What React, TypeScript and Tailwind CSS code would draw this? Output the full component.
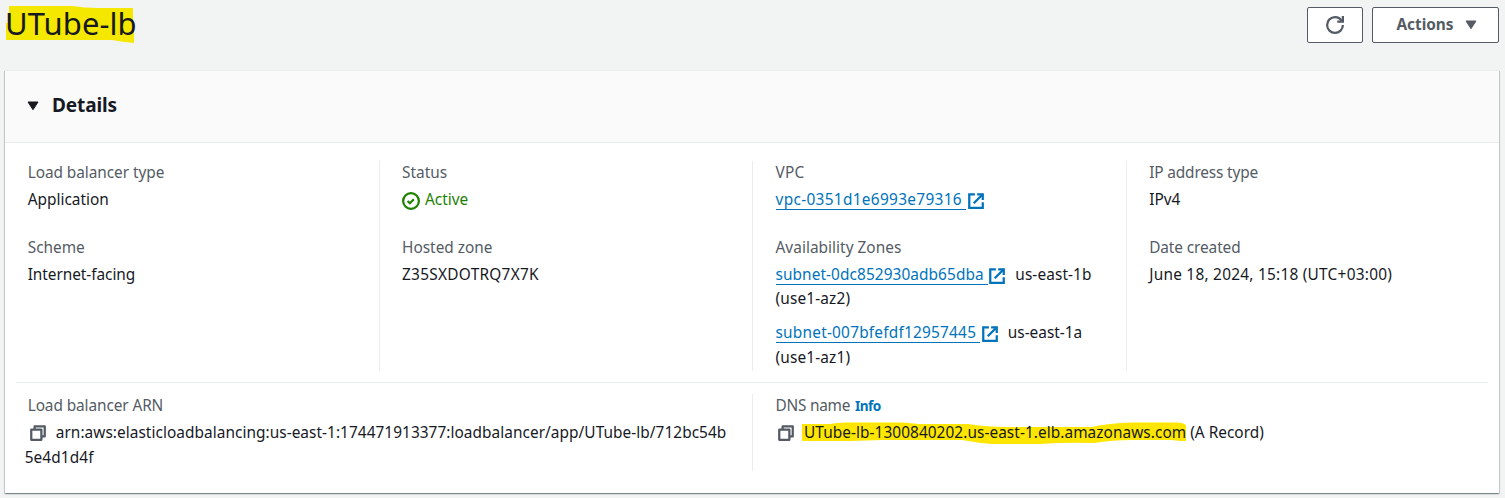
import type { ReactNode } from "react";

function ExternalIcon() {
  return (
    <svg className="h-[18px] w-[18px] shrink-0" viewBox="0 0 16 16" fill="none" stroke="#0073bb" strokeWidth="2">
      <path d="M10 2h4v4" strokeLinecap="square" />
      <path d="m6 10 8-8" />
      <path d="M14 9.05V14H2V2h5" />
    </svg>
  );
}

function CopyIcon() {
  return (
    <svg className="h-[18px] w-[18px] shrink-0" viewBox="0 0 16 16" fill="none" stroke="#545b64" strokeWidth="2" strokeLinejoin="round">
      <path d="M2 5h9v9H2z" />
      <path d="M5 5V2h9v9h-3" />
    </svg>
  );
}

function Field({ label, children, className = "" }: { label: ReactNode; children: ReactNode; className?: string }) {
  return (
    <div className={className}>
      <div className="leading-[22px] text-[#545b64]">{label}</div>
      <div className="mt-1 leading-6">{children}</div>
    </div>
  );
}

function Link({ children, className = "" }: { children: ReactNode; className?: string }) {
  return (
    <a className="flex text-[#0073bb]">
      <span className={`h-[22px] border-b border-[#0073bb] pr-1 leading-6 ${className}`}>{children}</span>
      <span className="ml-[0.6px] mt-1">
        <ExternalIcon />
      </span>
    </a>
  );
}

export default function App() {
  return (
    <div className="flex h-[498px] w-[1505px] flex-col overflow-hidden whitespace-nowrap bg-[#f2f3f3] font-['Noto_Sans',sans-serif] text-[15.4px] text-[#16191f]">
      <header className="flex h-[70px] shrink-0 justify-between pl-[6px] pr-[6px]">
        <div className="relative">
          <svg className="absolute left-0 top-0 h-[46px] w-[132px]" viewBox="0 0 132 46">
            <path d="M3 6H66Q78 8 92 8H127V22H128V43Q116 42 106 40H0V23H3Z" fill="#f5e800" />
          </svg>
          <h1 className="relative -ml-px text-[31px] leading-[46px]"><span className="tracking-[0.08px]">UTube-lb</span></h1>
        </div>
        <div className="flex gap-[9px] pt-[7px]">
          <button className="flex h-9 w-14 items-center justify-center rounded-[2px] border border-[#545b64] bg-white">
            <svg className="h-[18px] w-[18px] overflow-visible" viewBox="0 0 16 16" fill="none" stroke="#545b64" strokeWidth="2">
              <path d="M10 5h5V0" />
              <path d="M15 8a6.957 6.957 0 0 1-7 7 6.957 6.957 0 0 1-7-7 6.957 6.957 0 0 1 7-7 6.87 6.87 0 0 1 6.3 4" />
            </svg>
          </button>
          <button className="flex h-9 w-[127px] items-center rounded-[2px] border border-[#545b64] bg-white pl-[23px] font-bold text-[#545b64]">
            <span className="w-[58px]">Actions</span>
            <svg className="ml-[11px] h-[10px] w-[12px]" viewBox="0 0 12 10">
              <path d="M1 1h10L6 8.7z" fill="#545b64" stroke="#545b64" strokeLinejoin="round" />
            </svg>
          </button>
        </div>
      </header>

      <section className="ml-[5px] flex h-[423px] w-[1494px] shrink-0 flex-col border-t border-[#eaeded] bg-white shadow-[0_1px_1px_0_rgba(0,28,36,0.3),1px_1px_1px_0_rgba(0,28,36,0.15),-1px_1px_1px_0_rgba(0,28,36,0.15)]">
        <div className="flex h-[72px] shrink-0 items-center border-b border-[#eaeded] bg-[#fafafa] pl-[22px]">
          <svg className="h-[10px] w-[12px] -translate-y-px" viewBox="0 0 12 10">
            <path d="M1 1h10L6 8.7z" fill="#16191f" stroke="#16191f" strokeLinejoin="round" />
          </svg>
          <h2 className="ml-[13px] -translate-y-px text-[19px] font-bold"><span className="tracking-[-0.1px]">Details</span></h2>
        </div>

        <div className="mt-[18px] grid h-[210px] shrink-0 grid-cols-4">
          <div className="flex flex-col gap-[25px] pl-[22.7px] pt-px">
            <Field label={<span className="tracking-[-0.06px]">Load balancer type</span>}>Application</Field>
            <Field label="Scheme"><span className="tracking-[-0.05px]">Internet-facing</span></Field>
          </div>
          <div className="flex flex-col gap-[25px] border-l border-[#eaeded] pl-[22.5px] pt-px">
            <Field label="Status">
              <div className="flex text-[#1d8102]">
                <svg className="mt-1 h-[18px] w-[18px]" viewBox="0 0 16 16" fill="none" stroke="#1d8102" strokeWidth="2">
                  <circle cx="8" cy="8" r="7" />
                  <path d="m5 8 2 2 3.521-3.521" />
                </svg>
                <span className="ml-[5px]">Active</span>
              </div>
            </Field>
            <Field label="Hosted zone"><span className="tracking-[0.28px]">Z35SXDOTRQ7X7K</span></Field>
          </div>
          <div className="flex flex-col gap-[25px] border-l border-[#eaeded] pl-[22.5px] pt-px">
            <Field label={<span className="tracking-[0.2px]">VPC</span>}>
              <div className="flex h-6"><Link className="tracking-[0.32px]">vpc-0351d1e6993e79316</Link></div>
            </Field>
            <Field label={<span className="tracking-[0.03px]">Availability Zones</span>}>
              <div className="flex h-6"><Link className="tracking-[0.08px]">subnet-0dc852930adb65dba</Link><span className="ml-[9px] tracking-[0.1px]">us-east-1b</span></div>
              <div><span className="tracking-[0.15px]">(use1-az2)</span></div>
              <div className="mt-[10px] flex h-[25px]"><Link className="tracking-[0.22px]">subnet-007bfefdf12957445</Link><span className="ml-[9px]">us-east-1a</span></div>
              <div><span className="tracking-[0.15px]">(use1-az1)</span></div>
            </Field>
          </div>
          <div className="flex flex-col gap-[25px] border-l border-[#eaeded] pl-[22.7px] pt-px">
            <Field label={<span className="tracking-[-0.15px]">IP address type</span>}>IPv4</Field>
            <Field label={<span className="tracking-[-0.1px]">Date created</span>}><span className="tracking-[0.25px]">June 18, 2024, 15:18 (UTC+03:00)</span></Field>
          </div>
        </div>

        <div className="mx-[11px] mt-[11px] h-px shrink-0 bg-[#eaeded]" />

        <div className="mt-[11px] grid h-[77px] shrink-0 grid-cols-2">
          <div className="pl-[22.7px] pt-px">
            <Field label={<span className="tracking-[-0.1px]">Load balancer ARN</span>}>
              <div className="flex h-[25px]">
                <span className="ml-[1.1px] mr-[9px] mt-[3px]"><CopyIcon /></span>
                <span className="tracking-[0.048px]">arn:aws:elasticloadbalancing:us-east-1:174471913377:loadbalancer/app/UTube-lb/712bc54b</span>
              </div>
              <div className="-ml-[3px]"><span className="tracking-[0.1px]">5e4d1d4f</span></div>
            </Field>
          </div>
          <div className="border-l border-[#eaeded] pl-[22.5px] pt-px">
            <Field label={<><span className="tracking-[-0.25px]">DNS name</span><a className="ml-[5px] text-[13.6px] font-bold tracking-[-0.6px] text-[#0073bb]">Info</a></>}>
              <div className="flex">
                <span className="ml-[1.3px] mr-[9.2px] mt-[3px]"><CopyIcon /></span>
                <span className="relative">
                  <svg className="absolute -left-[2px] top-px h-6 w-[386px]" viewBox="0 0 386 24">
                    <path d="M0 2H28Q36 0 48 .5H100Q110 1 116 2H166Q184 5 204 5H290Q306 1 330 .5H376Q384 1 384 4V19H378L370 18H330Q310 18 292 21Q264 20 238 22H190Q176 21 160 18H80L48 19H0Z" fill="#ffe600" />
                  </svg>
                  <span className="relative tracking-[0.06px]">UTube-lb-1300840202.us-east-1.elb.amazonaws.com</span>
                </span>
                <span className="ml-1">(A Record)</span>
              </div>
            </Field>
          </div>
        </div>
      </section>
    </div>
  );
}
